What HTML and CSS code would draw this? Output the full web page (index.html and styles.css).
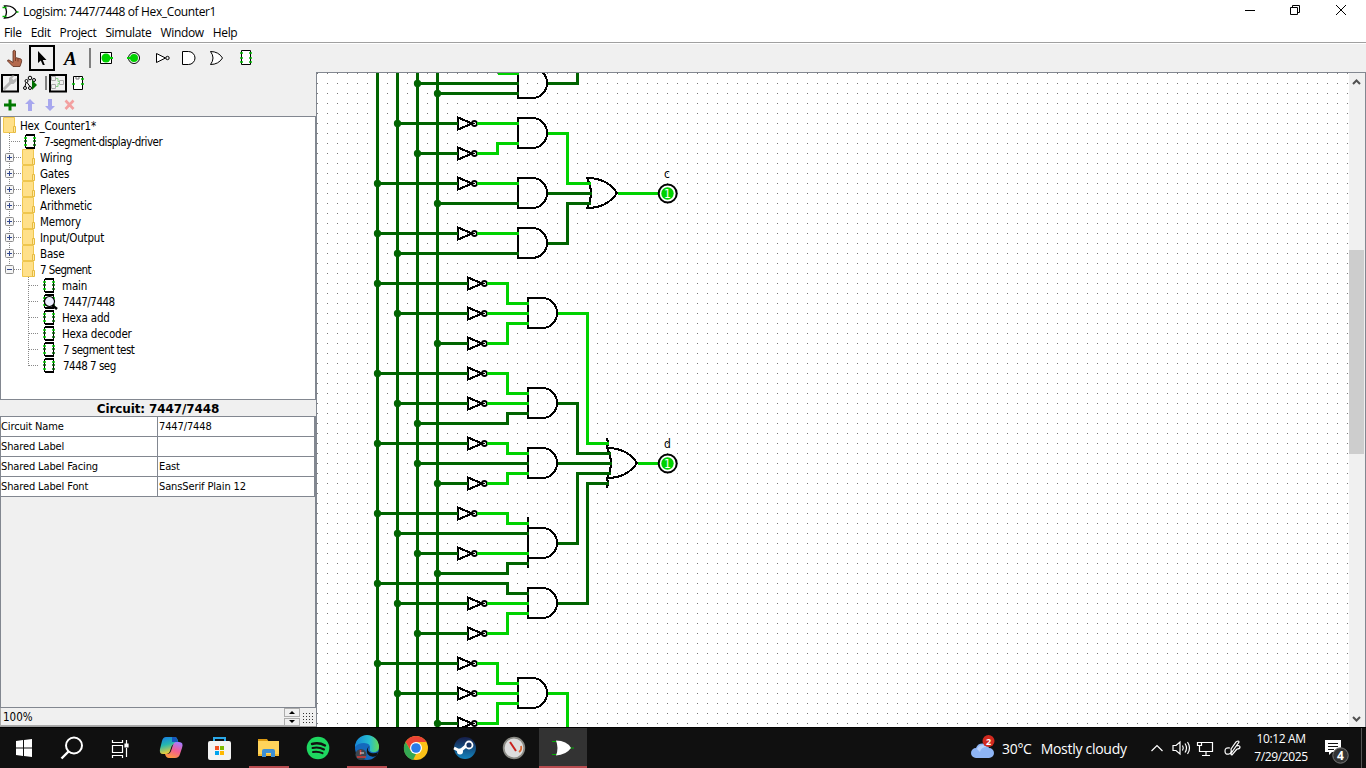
FILE: index.html
```html
<!DOCTYPE html>
<html lang="en">
<head>
<meta charset="utf-8">
<title>Logisim: 7447/7448 of Hex_Counter1</title>
<link rel="stylesheet" href="styles.css">
</head>
<body>
<svg class="defs" aria-hidden="true">
  <defs>
    <symbol id="chip" viewBox="0 0 14 16"><path class="chipbox" d="M2.500 2.500h9v12h-9z"/><path class="chipbox" d="M2.500 1.500h9M2.500 15h9"/><path class="g1" d="M1 5h3M1 12h3M10 5h3"/><path class="g2" d="M1 8h3M10 8h3M10 12h3"/></symbol>
    <symbol id="folder" viewBox="0 0 14 16"><path fill="#ffe08a" stroke="#efc64e" d="M.5 .5h11v15H.5z"/><path fill="#ffe9a6" stroke="#e6bb3f" d="M10.500 9.500h2v6h-2z"/></symbol>
    <symbol id="plus" viewBox="0 0 22 16"><path class="dots" d="M9.500 0v16M14 8.500h8"/><rect x="5.500" y="4.500" width="8" height="8" rx="1" fill="#f5f5f5" stroke="#8c8c8c"/><path stroke="#31478f" d="M7 8.500h5M9.500 6v5"/></symbol>
    <symbol id="minus" viewBox="0 0 22 16"><path class="dots" d="M9.500 0v4M14 8.500h8"/><rect x="5.500" y="4.500" width="8" height="8" rx="1" fill="#f5f5f5" stroke="#8c8c8c"/><path stroke="#31478f" d="M7 8.500h5"/></symbol>
    <symbol id="branch" viewBox="0 0 42 16"><path class="dots" d="M28.500 0v16M29 8.500h10"/></symbol>
    <symbol id="branchend" viewBox="0 0 42 16"><path class="dots" d="M28.500 0v9M29 8.500h10"/></symbol>
    <g id="not"><path d="M-19-5.500L-5 .5L-19 6.500Z"/><circle class="smooth" cx="-2.500" cy=".5" r="2.500"/></g>
    <path id="and" d="M-29-15h14.500a14.500 15 0 0 1 0 30h-14.500z"/>
    <path id="or" d="M0 0Q-10-15-30-15Q-22 0-30 15Q-10 15 0 0Z"/>
  </defs>
</svg>
<div class="window">
  <header class="titlebar">
    <svg class="appicon" width="18" height="18" viewBox="0 0 18 18"><path d="M4 3q9-1 12 6q-4 6-12 6q4-6 0-12z" fill="#fff" stroke="#000" stroke-width="1.300"/><path d="M2 4.500h4M2 13.500h4M16 9h2" stroke="#00b800" stroke-width="1.500"/></svg>
    <span class="title">Logisim: 7447/7448 of Hex_Counter1</span>
    <svg class="controls" width="122" height="22" viewBox="1244 0 122 22" fill="none" stroke="#000"><path d="M1245 10.500h10"/><path d="M1290.500 7.500h7v7h-7zM1292.500 7v-1.500h7v7h-2"/><path d="M1336 5l10 10M1346 5l-10 10"/></svg>
  </header>
  <nav class="menu"><span>File</span><span>Edit</span><span>Project</span><span>Simulate</span><span>Window</span><span>Help</span></nav>
  <div class="toolbar">
    <svg width="270" height="28" viewBox="0 44 270 28" fill="none" stroke="#000">
      <path fill="#b56a4e" stroke="#5c2c1c" stroke-width=".8" d="M13 51q1.200-1.500 2.500 0v6.500l5.500 1.500q1 1 .5 3l-1.500 4.500h-7l-5.500-5.500q0-1.500 1.500-1l4 2.500z"/><path stroke="#5c2c1c" stroke-width=".7" d="M15.500 58v3M18 58.500v3"/>
      <rect x="30" y="46" width="24" height="24" stroke-width="2"/>
      <path fill="#000" stroke="none" d="M38 51v12l2.800-2.500 2 4.500h2l-2-5h3.700z"/>
      <text x="64" y="65" class="toolA">A</text>
      <path stroke="#808080" stroke-width="2" d="M90 48v20"/>
      <path fill="#fff" d="M100.500 52.500h11v11h-11z"/><circle cx="106" cy="58" r="4.500" fill="#00d200" stroke="none"/><path stroke="#00d200" stroke-width="2" d="M110 58h3"/>
      <circle cx="134" cy="58" r="5.500" fill="#fff"/><circle cx="134" cy="58" r="4" fill="#00d200" stroke="none"/><path stroke="#00d200" stroke-width="2" d="M127 58h4"/>
      <path fill="#fff" d="M156.500 53.500v9l9-4.500z"/><circle cx="167.500" cy="58" r="1.700"/>
      <path fill="#fff" d="M182.500 51.500h6a6.500 6.500 0 0 1 0 13h-6z"/>
      <path fill="#fff" d="M210.500 51.500q8 0 12 6.500q-4 6.500-12 6.500q5-6.500 0-13z"/>
      <path fill="#fff" d="M241.500 50.500h9v14h-9z"/><path stroke="#00c000" stroke-width="1.500" d="M240 53h3M240 58h3M240 62h3M249 53h3M249 58h3M249 62h3"/>
    </svg>
  </div>
  <main class="work">
    <aside class="side">
      <svg class="sidetools" width="316" height="43" viewBox="0 73 316 43" fill="none" stroke="#000">
        <rect x="2" y="75" width="16" height="16.500" stroke-width="2"/><path stroke="#b5b5b5" stroke-width="3" stroke-linecap="round" d="M4.500 88.500l7-7"/><path fill="#b5b5b5" stroke="none" d="M9 82v-4l3-2.500h2.500l-2.500 3 1.500 1.500 3-2v3l-3 3h-3.500z"/>
        <circle cx="30" cy="78" r="1.800"/><circle cx="26.500" cy="81" r="1.500"/><circle cx="34" cy="80" r="1.500"/><circle cx="25" cy="88" r="1.500"/><circle cx="30" cy="88" r="1.500"/><path d="M26 82.500l-1 4M27 82.500l3 4"/><path fill="#007000" stroke="none" d="M32 80v10l5-5z"/>
        <path stroke="#808080" stroke-width="2" d="M46 76v14"/>
        <rect x="50" y="75" width="16" height="16.500" stroke-width="2"/><path stroke="#aaa" d="M51.500 76.500h4v4h-4zM51.500 84.500h4v4h-4zM59.500 80.500h4v4h-4z"/><path stroke="#8bd38b" d="M56 78.500h2v3h2M56 86.500h2v-3h2"/>
        <path fill="#fff" d="M73.500 76.500h9v13h-9z"/><path d="M76 77v2h3v-2" stroke="#777"/><path stroke="#00c000" stroke-width="1.500" d="M72 84h3M81 79h3M81 84h3"/>
        <path stroke="#007800" stroke-width="3" d="M4 105h12M10 99.500v11"/>
        <path fill="#a7a7ee" stroke="none" d="M30 99l5 5h-3v7h-4v-7h-3z"/>
        <path fill="#a7a7ee" stroke="none" d="M50 111l5-5h-3v-7h-4v7h-3z"/>
        <path stroke="#f3a0a0" stroke-width="2.600" d="M65.500 100.500l8 8.500M73.500 100.500l-8 8.500"/>
      </svg>
      <div class="tree">
        <div class="row root"><svg width="14" height="16"><use href="#folder"/></svg><span>Hex_Counter1*</span></div>
        <div class="row drv"><svg width="23" height="16"><path class="dots" d="M9.500 0v16M11 8.500h10"/></svg><svg width="14" height="16"><use href="#chip"/></svg><span>7-segment-display-driver</span></div>
        <div class="row"><svg width="22" height="16"><use href="#plus"/></svg><svg width="14" height="16"><use href="#folder"/></svg><span>Wiring</span></div>
        <div class="row"><svg width="22" height="16"><use href="#plus"/></svg><svg width="14" height="16"><use href="#folder"/></svg><span>Gates</span></div>
        <div class="row"><svg width="22" height="16"><use href="#plus"/></svg><svg width="14" height="16"><use href="#folder"/></svg><span>Plexers</span></div>
        <div class="row"><svg width="22" height="16"><use href="#plus"/></svg><svg width="14" height="16"><use href="#folder"/></svg><span>Arithmetic</span></div>
        <div class="row"><svg width="22" height="16"><use href="#plus"/></svg><svg width="14" height="16"><use href="#folder"/></svg><span>Memory</span></div>
        <div class="row"><svg width="22" height="16"><use href="#plus"/></svg><svg width="14" height="16"><use href="#folder"/></svg><span>Input/Output</span></div>
        <div class="row"><svg width="22" height="16"><use href="#plus"/></svg><svg width="14" height="16"><use href="#folder"/></svg><span>Base</span></div>
        <div class="row seg"><svg width="22" height="16"><use href="#minus"/></svg><svg width="14" height="16"><use href="#folder"/></svg><span>7 Segment</span></div>
        <div class="row leaf"><svg width="42" height="16"><use href="#branch"/></svg><svg width="14" height="16"><use href="#chip"/></svg><span>main</span></div>
        <div class="row leaf num"><svg width="42" height="16"><use href="#branch"/></svg><svg class="lens" width="14" height="16"><use href="#chip"/><circle cx="7.500" cy="8.500" r="5" fill="#eef" stroke="#000" stroke-width="1.200"/><path d="M10.500 12.500l4.500 3.500" stroke="#000" stroke-width="2.600"/></svg><span>7447/7448</span></div>
        <div class="row leaf"><svg width="42" height="16"><use href="#branch"/></svg><svg width="14" height="16"><use href="#chip"/></svg><span>Hexa add</span></div>
        <div class="row leaf"><svg width="42" height="16"><use href="#branch"/></svg><svg width="14" height="16"><use href="#chip"/></svg><span>Hexa decoder</span></div>
        <div class="row leaf num"><svg width="42" height="16"><use href="#branch"/></svg><svg width="14" height="16"><use href="#chip"/></svg><span>7 segment test</span></div>
        <div class="row leaf num"><svg width="42" height="16"><use href="#branchend"/></svg><svg width="14" height="16"><use href="#chip"/></svg><span>7448 7 seg</span></div>
      </div>
      <div class="attrhead">Circuit: 7447/7448</div>
      <div class="attrs">
        <div>Circuit Name</div><div>7447/7448</div>
        <div>Shared Label</div><div></div>
        <div>Shared Label Facing</div><div>East</div>
        <div>Shared Label Font</div><div>SansSerif Plain 12</div>
      </div>
      <div class="blank"></div>
      <div class="zoombar">
        <div class="zoomval">100%</div>
        <div class="spin"><i></i><i class="down"></i></div>
        <svg class="grip" width="16" height="19" viewBox="300 708 16 19"><path d="M303 713.500h11M303 716.500h11M303 719.500h11M303 722.500h11" stroke="#333" stroke-dasharray="1 2"/></svg>
      </div>
    </aside>
    <section class="canvas">
      <svg width="1032" height="654" viewBox="317 73 1032 654">
        <defs><pattern id="grid" x="317" y="73" width="10" height="10" patternUnits="userSpaceOnUse"><rect width="1" height="1" fill="#777"/></pattern></defs>
        <rect x="317" y="73" width="1032" height="654" fill="#fff"/>
        <rect x="317" y="73" width="1032" height="654" fill="url(#grid)"/>
        <g class="gates">
          <use href="#not" x="477" y="123"/><use href="#not" x="477" y="153"/><use href="#not" x="477" y="183"/><use href="#not" x="477" y="233"/>
          <use href="#not" x="487" y="283"/><use href="#not" x="487" y="313"/><use href="#not" x="487" y="343"/><use href="#not" x="487" y="373"/><use href="#not" x="487" y="403"/><use href="#not" x="487" y="443"/><use href="#not" x="487" y="483"/>
          <use href="#not" x="477" y="513"/><use href="#not" x="477" y="553"/><use href="#not" x="487" y="603"/><use href="#not" x="487" y="633"/>
          <use href="#not" x="477" y="663"/><use href="#not" x="477" y="693"/><use href="#not" x="477" y="723"/>
          <use href="#and" x="547" y="83"/><use href="#and" x="547" y="133"/><use href="#and" x="547" y="193"/><use href="#and" x="547" y="243"/>
          <use href="#and" x="557" y="313"/><use href="#and" x="557" y="403"/><use href="#and" x="557" y="463"/><use href="#and" x="557" y="543"/><use href="#and" x="557" y="603"/><use href="#and" x="547" y="693"/>
          <path d="M528 517v51"/>
          <use href="#or" x="617" y="193"/><use href="#or" x="637" y="463"/>
          <path d="M607 438q2 5 0 10M607 478q2 5 0 10"/>
        </g>
        <g class="wires" transform="translate(.5 .5)">
          <path class="off" d="M377 70V730M397 70V730M417 70V730M437 70V730M417 83H518M437 93H518M547 83H577V70M397 123H457M417 153H457M377 183H457M437 203H518M547 193H591M377 233H457M397 253H518M547 243H567V203H590M377 283H467M397 313H467M437 343H467M377 373H467M397 403H467M417 423H507V413H528M557 403H577V453H610M377 443H467M417 463H528M557 463H611M437 483H467M377 513H457M397 533H528M417 553H457M437 573H507V563H528M557 543H577V473H610M377 583H507V593H528M397 603H467M417 633H467M557 603H587V483H608M377 663H457M397 693H457M437 723H457"/>
          <path class="on" d="M497 73H518M476 123H518M476 153H497V143H518M547 133H567V183H590M476 183H518M476 233H518M617 193H657M486 283H507V303H528M486 313H528M486 343H507V323H528M557 313H587V443H608M486 373H507V393H528M486 403H528M486 443H507V453H528M486 483H507V473H528M637 463H657M476 513H507V523H528M476 553H528M486 603H528M486 633H507V613H528M476 663H497V683H518M476 693H518M476 723H497V703H518M547 693H567V730"/>
          <path class="joint" d="M417 83h0M437 93h0M397 123h0M417 153h0M377 183h0M437 203h0M377 233h0M397 253h0M377 283h0M397 313h0M437 343h0M377 373h0M397 403h0M417 423h0M377 443h0M417 463h0M437 483h0M377 513h0M397 533h0M417 553h0M437 573h0M377 583h0M397 603h0M417 633h0M377 663h0M397 693h0M437 723h0"/>
        </g>
        <g class="pin"><circle cx="667.700" cy="193.500" r="9"/><circle class="lit" cx="667.500" cy="193.500" r="6.200"/><text class="bit" x="667.500" y="198">1</text><text x="667" y="178">c</text></g>
        <g class="pin"><circle cx="667.700" cy="463.500" r="9"/><circle class="lit" cx="667.500" cy="463.500" r="6.200"/><text class="bit" x="667.500" y="468">1</text><text x="667.500" y="448">d</text></g>
      </svg>
      <div class="scroll">
        <svg width="15" height="18" viewBox="0 0 15 18"><path d="M4 11l3.500-3.500L11 11" fill="none" stroke="#505050" stroke-width="2"/></svg>
        <div class="thumb"></div>
        <svg class="sdown" width="15" height="18" viewBox="0 0 15 18"><path d="M4 8l3.500 3.500L11 8" fill="none" stroke="#505050" stroke-width="2"/></svg>
      </div>
    </section>
  </main>
  <footer class="taskbar">
    <div class="sys">
      <svg viewBox="0 0 48 40"><path fill="#fff" d="M16 13l7-1v7.500h-7zM24 12l8-1v8.500h-8zM16 20.500h7V28l-7-1zM24 20.500h8V29l-8-1z"/></svg>
      <svg viewBox="0 0 48 40"><circle cx="26" cy="17.500" r="8" fill="none" stroke="#fff" stroke-width="2"/><path d="M20.500 23.500l-7 7" stroke="#fff" stroke-width="2.400"/></svg>
      <svg viewBox="0 0 48 40" fill="none" stroke="#fff" stroke-width="1.200"><path d="M16.500 12v2.500h10V12M16.500 17.500h10v7h-10zM16.500 30v-2.500h10V30M30.500 12v4M30.500 20v9"/><path d="M29 16h3v3h-3z" fill="#fff"/></svg>
    </div>
    <div class="apps">
      <svg viewBox="0 0 49 40"><defs><linearGradient id="ca" x2=".3" y2="1"><stop stop-color="#1778e8"/><stop offset=".5" stop-color="#25b8ae"/><stop offset="1" stop-color="#f4cf35"/></linearGradient><linearGradient id="cb" x1=".7" x2=".3" y2="1"><stop stop-color="#a77bff"/><stop offset=".5" stop-color="#f35e91"/><stop offset="1" stop-color="#ff9a3d"/></linearGradient></defs><path fill="url(#ca)" d="M19 9h9q2 0 3 4l1 3h-4q-3 0-4 4l-1 3q-1 3-4 3h-3q-4 0-3-5l2-8q1-4 4-4z"/><path fill="url(#cb)" d="M29 14h3q5 0 3 6l-2 6q-1 4-5 4h-6q-3 0-4-4h2q3 0 4-3l2-6q1-3 3-3z"/><path fill="#1758bd" d="M25 9h3q2 0 3 5h-6z"/></svg>
      <svg viewBox="1 0 49 40"><path fill="none" stroke="#2ba8e8" stroke-width="2" d="M19 14v-4h11v4"/><rect x="13" y="13" width="23" height="19" rx="2" fill="#f3f3f3"/><path fill="#f25022" d="M20 18h4v4h-4z"/><path fill="#7fba00" d="M25 18h4v4h-4z"/><path fill="#00a4ef" d="M20 23h4v4h-4z"/><path fill="#ffb900" d="M25 23h4v4h-4z"/></svg>
      <svg class="run file" viewBox="0 0 49 40"><path fill="#dc9a12" d="M13 11h9l2 3h-11z"/><path fill="#ffd35a" d="M13 13h21v15H13z"/><path fill="#f3b931" d="M13 26h21v2H13z"/><path fill="#3d8fd4" d="M17 29v-6q0-2 2-2h9q2 0 2 2v6h-4v-4h-5v4z"/></svg>
      <svg viewBox="0 0 49 40"><circle cx="24" cy="20" r="11.300" fill="#1ed760"/><path fill="none" stroke="#111" stroke-linecap="round" stroke-width="2.400" d="M18 16q7-2 13 1.500"/><path fill="none" stroke="#111" stroke-linecap="round" stroke-width="2" d="M18.500 20q6-1.500 11.500 1.500M19 24q5-1 9.500 1.200"/></svg>
      <svg class="run file" viewBox="0 0 49 40"><defs><linearGradient id="eg" x2="1"><stop stop-color="#1687d9"/><stop offset=".6" stop-color="#26bdd0"/><stop offset="1" stop-color="#65dc55"/></linearGradient></defs><circle cx="24" cy="20" r="12" fill="#1469bd"/><path fill="url(#eg)" d="M12 19a12 12 0 0 1 24 0q0 6-7 5-3-1-2-3 1-6-6-6-6 0-9 4z"/><path fill="#101010" d="M26 18q-3 5 2 7 4 1 7-1l-1.500 4q-6 2-9-2-2-4 1.500-8z"/><circle cx="18" cy="26.500" r="5.500" fill="#3c4650"/><path d="M14 29h9M17.500 22v5" stroke="#d43d38" stroke-width="1.600"/><path d="M17 25h4" stroke="#ddd"/></svg>
      <svg viewBox="0 0 49 40"><circle cx="24" cy="20" r="12" fill="#fbc117"/><path fill="#ea4335" d="M13.600 14a12 12 0 0 1 20.800 0H24l-5 9z"/><path fill="#34a853" d="M13.600 14l5.200 9 5.200 3-3 6A12 12 0 0 1 13.600 14z"/><circle cx="24" cy="20" r="6" fill="#fff"/><circle cx="24" cy="20" r="4.800" fill="#287bea"/></svg>
      <svg viewBox="0 0 49 40"><defs><linearGradient id="sg" x2="0" y2="1"><stop stop-color="#161d49"/><stop offset="1" stop-color="#1383bd"/></linearGradient></defs><circle cx="24" cy="20" r="11" fill="url(#sg)"/><path d="M13 20l6 3 6-5" fill="none" stroke="#fff" stroke-width="3"/><circle cx="19" cy="23.500" r="3" fill="#fff"/><circle cx="28" cy="17" r="3.500" fill="#163463" stroke="#fff" stroke-width="1.800"/></svg>
      <svg viewBox="0 0 49 40"><circle cx="24" cy="20" r="10.300" fill="#ddd" stroke="#8b8b85" stroke-width="1.800"/><path d="M20 14l6 9" stroke="#c9201d" stroke-width="2"/><path d="M29 24q3-2 2-6" fill="none" stroke="#da6831" stroke-width="1.800"/></svg>
      <svg class="run current" viewBox="0 0 48 40"><path d="M13 13.500h5M13 26.500h5M31 20h4" stroke="#00a800"/><path fill="#fff" d="M17 12.500q11 0 15 7.500-5 7-15 7.500 3-7 0-15z"/></svg>
    </div>
    <div class="weather"><svg width="26" height="26" viewBox="0 0 26 26"><path fill="#8fb5f5" d="M6 23a5 5 0 0 1 0-10 7 7 0 0 1 13 0 5 5 0 0 1 0 10z"/><path fill="#b8d1fb" d="M7 14a6 6 0 0 1 10-2q-6 0-7 5z"/><circle cx="18.500" cy="6" r="6" fill="#d1291f"/><text x="18.500" y="9.500" class="badge">2</text></svg><span>30°C</span><span class="cloudy">Mostly cloudy</span></div>
    <svg class="tray" width="100" height="40" viewBox="1148 728 100 40" fill="none" stroke="#fff" stroke-width="1.200"><path d="M1151.500 751l5.500-5.500 5.500 5.500"/><path d="M1173 745.500h3l4-3.500v12l-4-3.500h-3zM1182.500 745.500q1.500 2.500 0 5M1185 743.500q3 4.500 0 9M1187.500 742q4 6 0 12"/><path d="M1202 742.500h10.500v9h-13V748M1206 752v3M1202 755.500h8M1197.500 742.500h4v3h-4zM1199.500 746v4"/><path d="M1230 748q-5-1-5 3t4 3q3-1 2-5l5-7q3-2 3 0l-7 10q-2 3 0 3l5-6M1236 746q4-1 4 1t-3 2"/></svg>
    <div class="clock"><span>10:12 AM</span><span>7/29/2025</span></div>
    <svg class="note" width="48" height="40" viewBox="1317 728 48 40"><path fill="#fff" d="M1325 740h16v12h-9l-3 3v-3h-4z"/><path d="M1328 743.500h10M1328 746.500h10M1328 749.500h6" stroke="#111"/><circle cx="1340.500" cy="755.500" r="7.700" fill="#333" stroke="#777"/><text x="1340.500" y="760" class="count">4</text><path d="M1361.500 728v40" stroke="#555"/></svg>
  </footer>
</div>
</body>
</html>
```
FILE: styles.css
```css
* { box-sizing: border-box; }
body { margin: 0; overflow: hidden; font: 11px "DejaVu Sans Condensed", "DejaVu Sans", sans-serif; color: #000; }
.defs { position: absolute; width: 0; height: 0; }
svg { display: block; flex: none; }
.window { width: 1366px; height: 768px; display: flex; flex-direction: column; background: #f0f0f0; }
.titlebar { height: 23px; display: flex; background: #fff; font: 12px/23px "Open Sans", "Noto Sans", sans-serif; }
.appicon { margin: 3px 3px 0 0; width: 19px; }
.title { flex: 1; padding-left: 1px; letter-spacing: -.36px; }
.menu { height: 20px; display: flex; gap: 9px; padding-left: 4px; background: #fff; border-bottom: 1px solid #a0a0a0; font: 12px/20px "Open Sans", "Noto Sans", sans-serif; letter-spacing: -.34px; }
.toolbar { height: 29px; border-top: 1px solid #fff; }
.toolA { font: italic bold 19px "Liberation Serif", serif; fill: #000; stroke: none; }
.work { height: 655px; display: flex; }
.side { width: 316px; display: flex; flex-direction: column; padding-top: 1px; }
.tree { height: 284px; border: 1px solid #828790; background: #fff; }
.row { height: 16px; display: flex; align-items: center; line-height: 16px; white-space: nowrap; margin-left: -1px; }
.row span { padding: 1px 0 0 4px; font-size: 11.500px; letter-spacing: -.18px; }
.root { padding-left: 3px; }
.root span { padding-left: 3px; }
.drv span { padding-left: 7px; letter-spacing: -.5px; }
.seg span { letter-spacing: -.6px; }
.leaf span { padding-left: 6px; }
.num span { padding-left: 7px; letter-spacing: -.5px; }
.lens { overflow: visible; }
.chipbox { fill: #fff; stroke: #000; stroke-width: 1; shape-rendering: crispEdges; }
.g1 { stroke: #00d200; stroke-width: 1.500; }
.g2 { stroke: #006400; stroke-width: 1.500; }
.dots { fill: none; stroke: #888; stroke-dasharray: 1 1; }
.attrhead { height: 16px; text-align: center; font: bold 12px/18px "DejaVu Sans", sans-serif; letter-spacing: -.12px; }
.attrs { display: grid; grid-template-columns: 157px 157px; grid-auto-rows: 20px; border: 1px solid #828790; border-bottom: 0; background: #fff; }
.attrs div { border-bottom: 1px solid #828790; border-right: 1px solid #828790; line-height: 19px; padding-left: 1px; white-space: nowrap; letter-spacing: -.12px; }
.attrs div:nth-child(odd) { padding-left: 0; }
.blank { flex: 1; border: 1px solid #828790; border-top: 0; }
.zoombar { height: 19px; display: flex; border-bottom: 1px solid #a0a0a0; }
.zoomval { width: 284px; border: 1px solid #aaa; border-top: 0; border-right: 0; line-height: 19px; padding-left: 2px; font-size: 11.500px; }
.spin { width: 16px; display: flex; flex-direction: column; gap: 1px; }
.spin i { flex: 1; border: 1px solid #adadad; display: flex; align-items: center; justify-content: center; }
.spin i::before { content: ""; border: 3px solid transparent; border-top: 0; border-bottom-color: #000; }
.spin .down::before { border: 3px solid transparent; border-bottom: 0; border-top-color: #000; }
.canvas { flex: 1; display: flex; height: 655px; border: 1px solid #828790; border-bottom: 0; }
.gates { fill: none; stroke: #000; stroke-width: 2; shape-rendering: crispEdges; }
.smooth { shape-rendering: auto; stroke-width: 1.800; }
.wires { fill: none; stroke-width: 3; shape-rendering: crispEdges; }
.off { stroke: #006400; }
.on { stroke: #00d200; }
.joint { stroke: #006400; stroke-width: 7.300; stroke-linecap: round; shape-rendering: auto; }
.pin { font: 12px "DejaVu Sans Condensed", "DejaVu Sans", sans-serif; text-anchor: middle; }
.pin circle { fill: #fff; stroke: #000; stroke-width: 2; }
.pin .lit { fill: #00d200; stroke: none; }
.pin .bit { fill: #fff; }
.scroll { width: 16px; display: flex; flex-direction: column; background: #f0f0f0; }
.thumb { width: 15px; height: 204px; margin-top: 159px; background: #cdcdcd; }
.sdown { margin-top: auto; }
.taskbar { height: 41px; display: flex; background: #101010; color: #fff; border-top: 1px solid #000; font: 12px "Open Sans", "Noto Sans", sans-serif; }
.sys { display: flex; width: 147px; }
.sys svg { width: 48px; height: 40px; }
.apps { display: flex; width: 823px; }
.apps svg { width: 49px; height: 40px; }
.run { background: linear-gradient(#b84c50, #b84c50) center bottom / 40px 2px no-repeat; }
.apps .file { background-position: 4px bottom; }
.apps .current { width: 48px; background: linear-gradient(#b84c50, #b84c50) center bottom / 48px 2px no-repeat #333; }
.weather { width: 178px; display: flex; align-items: center; font-size: 14px; white-space: nowrap; }
.weather span { padding-left: 6px; letter-spacing: -.3px; }
.weather .cloudy { padding-left: 9px; letter-spacing: -.28px; }
.badge { font: bold 9px "Open Sans", sans-serif; fill: #fff; text-anchor: middle; }
.clock { width: 70px; display: flex; flex-direction: column; align-items: center; padding: 2px 2px 0 0; line-height: 18px; letter-spacing: -.36px; margin-left: -1px; }
.count { font: bold 12px "Open Sans", sans-serif; fill: #fff; text-anchor: middle; }
```
